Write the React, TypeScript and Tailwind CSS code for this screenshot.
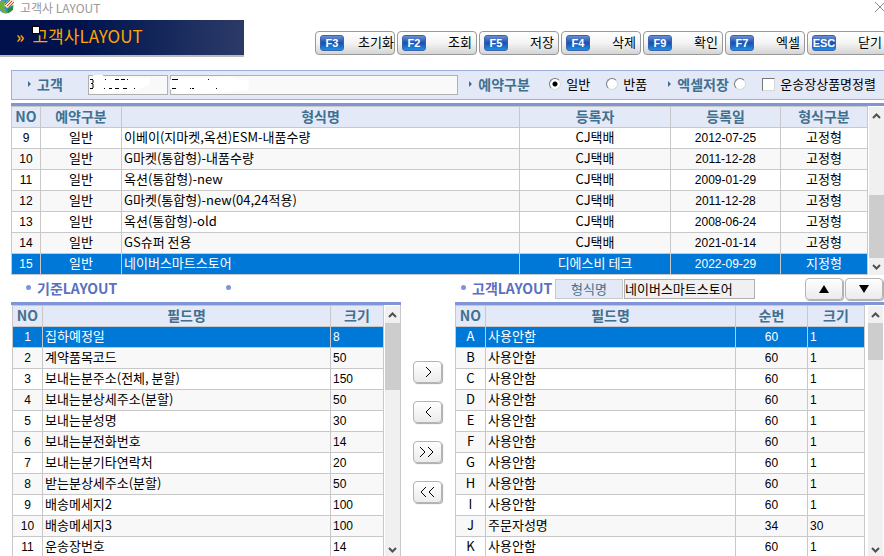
import type { ReactNode } from 'react';

type Column = { label: string; width?: string; align: string };

const functionKeys = [
  { code: 'F3', label: '초기화' },
  { code: 'F2', label: '조회' },
  { code: 'F5', label: '저장' },
  { code: 'F4', label: '삭제' },
  { code: 'F9', label: '확인' },
  { code: 'F7', label: '엑셀' },
  { code: 'ESC', label: '닫기' },
];

const formatColumns: Column[] = [
  { label: 'NO', width: 'w-[29px]', align: 'text-center' },
  { label: '예약구분', width: 'w-[81px]', align: 'text-center' },
  { label: '형식명', align: 'text-left' },
  { label: '등록자', width: 'w-[151px]', align: 'text-center' },
  { label: '등록일', width: 'w-[110px]', align: 'text-center' },
  { label: '형식구분', width: 'w-[87px]', align: 'text-center' },
];

const formatRows = [
  ['9', '일반', '이베이(지마켓,옥션)ESM-내품수량', 'CJ택배', '2012-07-25', '고정형'],
  ['10', '일반', 'G마켓(통합형)-내품수량', 'CJ택배', '2011-12-28', '고정형'],
  ['11', '일반', '옥션(통합형)-new', 'CJ택배', '2009-01-29', '고정형'],
  ['12', '일반', 'G마켓(통합형)-new(04,24적용)', 'CJ택배', '2011-12-28', '고정형'],
  ['13', '일반', '옥션(통합형)-old', 'CJ택배', '2008-06-24', '고정형'],
  ['14', '일반', 'GS슈퍼 전용', 'CJ택배', '2021-01-14', '고정형'],
  ['15', '일반', '네이버스마트스토어', '디에스비 테크', '2022-09-29', '지정형'],
];

const baseColumns: Column[] = [
  { label: 'NO', width: 'w-[30px]', align: 'text-center' },
  { label: '필드명', align: 'text-left' },
  { label: '크기', width: 'w-[53px]', align: 'text-left' },
];

const baseRows = [
  ['1', '집하예정일', '8'],
  ['2', '계약품목코드', '50'],
  ['3', '보내는분주소(전체, 분할)', '150'],
  ['4', '보내는분상세주소(분할)', '50'],
  ['5', '보내는분성명', '30'],
  ['6', '보내는분전화번호', '14'],
  ['7', '보내는분기타연락처', '20'],
  ['8', '받는분상세주소(분할)', '50'],
  ['9', '배송메세지2', '100'],
  ['10', '배송메세지3', '100'],
  ['11', '운송장번호', '14'],
];

const customerColumns: Column[] = [
  { label: 'NO', width: 'w-[30px]', align: 'text-center' },
  { label: '필드명', align: 'text-left' },
  { label: '순번', width: 'w-[72px]', align: 'text-center' },
  { label: '크기', width: 'w-[57px]', align: 'text-left' },
];

const customerRows = [
  ['A', '사용안함', '60', '1'],
  ['B', '사용안함', '60', '1'],
  ['C', '사용안함', '60', '1'],
  ['D', '사용안함', '60', '1'],
  ['E', '사용안함', '60', '1'],
  ['F', '사용안함', '60', '1'],
  ['G', '사용안함', '60', '1'],
  ['H', '사용안함', '60', '1'],
  ['I', '사용안함', '60', '1'],
  ['J', '주문자성명', '34', '30'],
  ['K', '사용안함', '60', '1'],
];

const moves = [
  { label: '추가', d: 'M8 2 13 7 8 12' },
  { label: '제거', d: 'M13 2 8 7 13 12' },
  { label: '모두 추가', d: 'M2 2 7 7 2 12M10 2 15 7 10 12' },
  { label: '모두 제거', d: 'M8 2 3 7 8 12M16 2 11 7 16 12' },
];

const DataTable = ({
  label,
  columns,
  rows,
  selected,
}: {
  label: string;
  columns: Column[];
  rows: string[][];
  selected: number;
}) => (
  <table
    aria-label={label}
    className="w-full table-fixed border-separate border-spacing-0 border-t border-l border-[#c8c8c8]"
  >
    <thead>
      <tr className="h-[21px] bg-[#e3e9f7]">
        {columns.map((column) => (
          <th
            key={column.label}
            className={`${column.width ?? ''} border-r border-b border-[#c8c8c8] p-0 align-top text-sm leading-[18px] font-bold whitespace-nowrap text-[#41708f]`}
          >
            {column.label}
          </th>
        ))}
      </tr>
    </thead>
    <tbody>
      {rows.map((row, i) => (
        <tr
          key={row[0]}
          className={`h-[21px] ${
            i === selected
              ? 'bg-[#0078d7] text-white'
              : i % 2
                ? 'bg-[#f8f8f8]'
                : 'bg-white'
          }`}
        >
          {row.map((cell, c) => (
            <td
              key={c}
              className={`${columns[c].align} border-r border-b border-[#c8c8c8] px-[2px] py-0 align-top whitespace-nowrap ${
                /^[\d-]+$/.test(cell)
                  ? "font-['Liberation_Sans'] text-xs leading-5"
                  : 'leading-[18px]'
              }`}
            >
              {cell}
            </td>
          ))}
        </tr>
      ))}
    </tbody>
  </table>
);

const Chevron = ({ up = false }: { up?: boolean }) => (
  <svg viewBox="0 0 9 6" className="h-[6px] w-[9px]" aria-hidden="true">
    <path
      d={up ? 'M1 5 4.5 1.5 8 5' : 'M1 1 4.5 4.5 8 1'}
      fill="none"
      stroke="#505050"
      strokeWidth="2"
    />
  </svg>
);

// spacer is the room above the thumb
const ScrollBar = ({ spacer, thumb }: { spacer: string; thumb: string }) => (
  <div className="mt-px flex w-[15px] shrink-0 flex-col bg-[#f0f0f0]">
    <button
      type="button"
      aria-label="위로"
      className="flex h-[17px] shrink-0 items-center justify-center"
    >
      <Chevron up />
    </button>
    <div className="flex flex-1 flex-col">
      <div className={spacer} />
      <div className={`${thumb} bg-[#cdcdcd]`} />
    </div>
    <button
      type="button"
      aria-label="아래로"
      className="flex h-[17px] shrink-0 items-center justify-center"
    >
      <Chevron />
    </button>
  </div>
);

const KeyButton = ({ code, label }: { code: string; label: string }) => (
  <button
    type="button"
    className="flex h-6 w-20 shrink-0 items-center justify-between rounded border border-[#999] bg-linear-to-b from-white via-[#f4f4f4] to-[#d4d4d4] pl-1"
  >
    <span className="flex h-4 w-6 items-center justify-center rounded-[3px] border border-[#3a62b0] bg-linear-to-b from-[#6a8fd2] via-[#1c4db0] to-[#1795e6] font-['Liberation_Sans'] text-[11px] leading-4 font-bold text-white">
      {code}
    </span>
    <span
      className={`pb-[2px] leading-5 whitespace-nowrap ${label.length < 3 ? 'pr-1' : ''}`}
    >
      {label}
    </span>
  </button>
);

const GrayButton = ({
  label,
  width,
  children,
}: {
  label: string;
  width: string;
  children: ReactNode;
}) => (
  <button
    type="button"
    aria-label={label}
    className={`${width} flex h-[22px] shrink-0 items-center justify-center rounded border border-[#b4b4b4] bg-linear-to-b from-white to-[#ebebeb] shadow-[1px_1px_1px_#aaa]`}
  >
    {children}
  </button>
);

const Arrow = () => (
  <svg viewBox="0 0 4 6" className="h-[6px] w-1 shrink-0" aria-hidden="true">
    <path d="M0 0 3 3 0 6z" fill="#41708f" />
  </svg>
);

const Dot = () => (
  <span className="size-[5px] shrink-0 rounded-full bg-[#7f93d8]" />
);

const Radio = ({ label, checked }: { label: string; checked?: boolean }) => (
  <input
    type="radio"
    name="kind"
    aria-label={label}
    defaultChecked={checked}
    className="size-3 shrink-0 appearance-none rounded-full border border-[#d8d8d8] border-t-[#777] border-l-[#777] bg-white checked:bg-[radial-gradient(circle,#000_2px,#fff_3px)]"
  />
);

const App = () => {
  return (
    <div className="flex h-screen flex-col overflow-hidden bg-white font-['Noto_Sans_CJK_KR',sans-serif] text-[13px] text-black">
      <header className="flex h-5 shrink-0 items-start justify-between">
        <div className="flex items-start gap-[6px]">
          <svg viewBox="0 0 14 14" className="size-[14px]" aria-hidden="true">
            <circle cx="6" cy="6" r="7.5" fill="#3c8fd0" />
            <path d="M0 2 4 0 6 5 4 8 7 13 3 13 0 9z" fill="#6fae3c" />
            <path d="M7 9 13 6 13 10 8 13z" fill="#2f8a3c" />
            <path d="M4 5 9 0 14 0 13 5 7 8z" fill="#f6e8c0" />
            <path d="M5 5 10 0M7 6 12 1M9 7 14 2" stroke="#d33b22" />
          </svg>
          <h1 className="text-xs leading-4 text-[#999]">고객사 LAYOUT</h1>
        </div>
        <button type="button" aria-label="창 닫기" className="pt-[2px]">
          <svg viewBox="0 0 9 10" className="h-[10px] w-[9px]">
            <path d="M0 0 9 9M0 10 9 1" stroke="#888" fill="none" />
          </svg>
        </button>
      </header>

      <div className="flex shrink-0 items-start justify-between">
        <div className="flex h-[37px] w-[244px] shrink-0 items-center gap-2 border-b-2 border-[#bbb] bg-linear-to-r from-[#00114c] from-30% to-[#2c3a68] pb-1 pl-4 text-[#ffa500]">
          <span className="text-base leading-5 font-bold">»</span>
          <div className="relative">
            <h2 className="text-[17px] leading-5">고객사LAYOUT</h2>
            <span className="absolute top-0 left-0 size-2 border border-black bg-white" />
          </div>
        </div>
        <nav className="-mr-[3px] flex gap-[2px] pt-[11px]">
          {functionKeys.map((key) => (
            <KeyButton key={key.code} {...key} />
          ))}
        </nav>
      </div>

      <form className="mt-[13px] ml-[11px] flex h-[30px] shrink-0 items-center border-y border-l border-[#9db1d8] bg-[#e3e9f7] pr-2 leading-5 whitespace-nowrap">
        <label
          htmlFor="customer"
          className="flex w-[76px] shrink-0 items-center gap-[5px] pb-[2px] pl-4 text-sm leading-5 font-bold text-[#41708f]"
        >
          <Arrow />
          고객
        </label>
        <div className="relative flex w-20 shrink-0">
          <input
            id="customer"
            className="h-5 w-full border border-[#b0b0b0] bg-[#f9f9f9]"
          />
          <svg
            viewBox="0 0 64 20"
            className="pointer-events-none absolute top-0 left-0 h-5 w-16"
            aria-hidden="true"
          >
            <path d="M5 0 14-1 16 2 62 3 61 10 48 15 16 19 5 18z" fill="#fff" />
            <path
              d="M2 4.5H5M5 5V8M3 8.5H5M5 9V13M2 13.5H5M17 4.5H18M27 4.5H31M33 4.5H37M39 4.5H40M16 13.5H17M21 13.5H24M27 13.5H31M35 13.5H39M46 13.5H47"
              stroke="#000"
            />
          </svg>
        </div>
        <div className="relative ml-[2px] flex min-w-0 flex-1">
          <input
            aria-label="고객명"
            className="h-5 w-full border border-[#b0b0b0] bg-[#f9f9f9]"
          />
          <svg
            viewBox="0 0 80 20"
            className="pointer-events-none absolute top-0 left-0 h-5 w-20"
            aria-hidden="true"
          >
            <path d="M-1 5 9 3 60 2 79 6 78 15 50 18 10 19-1 14z" fill="#fff" />
            <path
              d="M2 4.5H8M2 13.5H6M20 13.5H21M22 13.5H24M38 4.5H39M46 13.5H47"
              stroke="#000"
            />
          </svg>
        </div>
        <div className="ml-[11px] flex w-20 shrink-0 items-center gap-[5px] pb-[2px] text-sm leading-5 font-bold text-[#41708f]">
          <Arrow />
          예약구분
        </div>
        <label className="flex w-[57px] shrink-0 items-center gap-[5px] pb-[2px]">
          <Radio label="일반" checked />
          일반
        </label>
        <label className="flex w-[62px] shrink-0 items-center gap-[5px] pb-[2px]">
          <Radio label="반품" />
          반품
        </label>
        <label className="flex w-[94px] shrink-0 items-center gap-[5px] pb-[2px] text-sm leading-5 font-bold text-[#41708f]">
          <Arrow />
          엑셀저장
          <Radio label="엑셀저장" />
        </label>
        <label className="flex shrink-0 items-center gap-[5px] pb-[2px]">
          <input
            type="checkbox"
            className="size-[13px] shrink-0 appearance-none border border-[#d8d8d8] border-t-[#777] border-l-[#777] bg-white"
          />
          운송장상품명정렬
        </label>
      </form>

      <section className="mt-[3px] ml-[11px] shrink-0 border-t-[3px] border-[#8094d8]">
        <div className="flex gap-px">
          <div className="min-w-0 flex-1">
            <DataTable
              label="형식 목록"
              columns={formatColumns}
              rows={formatRows}
              selected={6}
            />
          </div>
          <ScrollBar spacer="h-[71px]" thumb="flex-1" />
        </div>
      </section>

      <main className="ml-[11px] grid shrink-0 grid-cols-[390fr_54px_429fr]">
        <section className="min-w-0">
          <div className="flex h-[27px] items-center pb-[2px] pl-[15px]">
            <div className="flex w-[200px] items-center gap-[6px]">
              <Dot />
              <h3 className="text-sm leading-5 font-bold text-[#5a70c0]">
                기준LAYOUT
              </h3>
            </div>
            <Dot />
          </div>
          <div className="flex gap-px border-t-[3px] border-[#8094d8] pl-px">
            <div className="min-w-0 flex-1">
              <DataTable
                label="기준LAYOUT"
                columns={baseColumns}
                rows={baseRows}
                selected={0}
              />
            </div>
            <div className="flex border-r border-[#c8c8c8]">
              <ScrollBar spacer="h-0" thumb="h-[67px]" />
            </div>
          </div>
        </section>

        <div className="flex flex-col items-center gap-[18px] pt-[86px] pr-[2px]">
          {moves.map((move) => (
            <GrayButton key={move.label} label={move.label} width="w-[29px]">
              <svg viewBox="0 0 18 14" className="h-[14px] w-[18px]">
                <path d={move.d} fill="none" stroke="#000" />
              </svg>
            </GrayButton>
          ))}
        </div>

        <section className="min-w-0">
          <div className="flex h-[27px] items-center pr-px pl-[6px]">
            <div className="flex w-[94px] shrink-0 items-center gap-[6px] pb-[2px]">
              <Dot />
              <h3 className="text-sm leading-5 font-bold text-[#5a70c0]">
                고객LAYOUT
              </h3>
            </div>
            <label
              htmlFor="format"
              className="flex h-5 w-[68px] shrink-0 items-center justify-center border border-[#c8c8c8] bg-[#e3e9f7] leading-5 text-[#41708f]"
            >
              형식명
            </label>
            <input
              id="format"
              defaultValue="네이버스마트스토어"
              className="ml-px h-5 w-[131px] border border-[#b0b0b0] bg-[#f0f0f0] leading-[18px]"
            />
            <div className="ml-auto flex gap-[2px]">
              <GrayButton label="위로 이동" width="w-[38px]">
                <svg viewBox="0 0 10 8" className="h-2 w-[10px]">
                  <path d="M5 0 10 8H0z" />
                </svg>
              </GrayButton>
              <GrayButton label="아래로 이동" width="w-[38px]">
                <svg viewBox="0 0 10 8" className="h-2 w-[10px]">
                  <path d="M0 0H10L5 8z" />
                </svg>
              </GrayButton>
            </div>
          </div>
          <div className="flex gap-[3px] border-t-[3px] border-[#8094d8] pr-px">
            <div className="min-w-0 flex-1">
              <DataTable
                label="고객LAYOUT"
                columns={customerColumns}
                rows={customerRows}
                selected={0}
              />
            </div>
            <ScrollBar spacer="h-0" thumb="h-[37px]" />
          </div>
        </section>
      </main>
    </div>
  );
};

export default App;
